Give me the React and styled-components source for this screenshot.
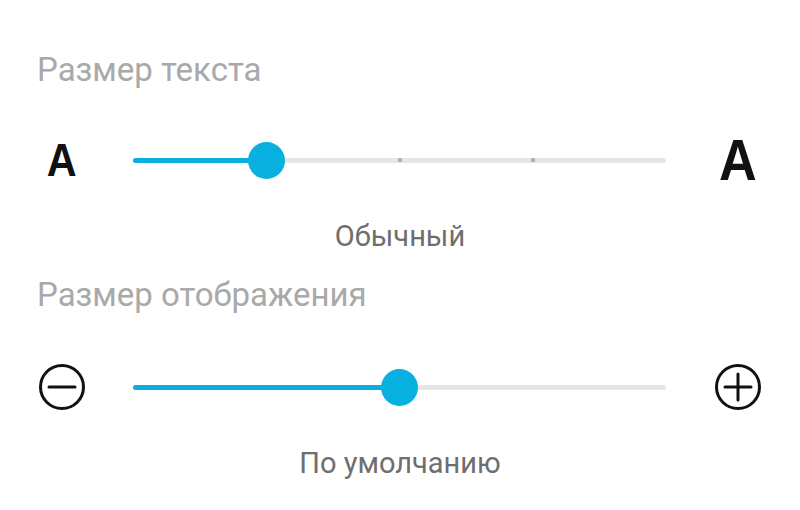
import styled, { createGlobalStyle } from 'styled-components';

const GlobalStyle = createGlobalStyle`
	html, body {
		margin: 0;
		padding: 0;
		background: #ffffff;
	}

	body {
		font-family: Roboto, 'Noto Sans', sans-serif;
	}
`;

const colors = {
	accent: '#08b0e0',
	track: '#e6e6e6',
	tick: '#b2b2b2',
	title: '#a9a9a9',
	caption: '#6e6e6e',
	icon: '#111111',
};

const Page = styled.div`
	width: 800px;
	height: 510px;
	padding-top: 50px;
	box-sizing: border-box;
	overflow: hidden;
`;

const SectionTitle = styled.h2`
	margin: ${(props) => props.$top || 0}px 0 0 37px;
	font-size: 33px;
	line-height: 40px;
	font-weight: 400;
	color: ${colors.title};
`;

const Row = styled.div`
	display: grid;
	grid-template-columns: 133px 533px 1fr;
	align-items: center;
	height: 60px;
	margin-top: ${(props) => props.$top}px;
`;

const LeftCell = styled.div`
	display: flex;
	justify-content: center;
	align-items: center;
	padding-right: 9px;
`;

const RightCell = styled.div`
	display: flex;
	justify-content: center;
	align-items: center;
	padding-left: 10px;
`;

const Letter = styled.span`
	font-family: 'Liberation Sans', Arial, sans-serif;
	font-weight: 700;
	font-size: ${(props) => props.$size}px;
	line-height: 1;
	color: ${colors.icon};
	transform: scaleX(0.9);
`;

const Track = styled.div`
	position: relative;
	height: 5px;
	border-radius: 3px;
	background: ${colors.track};
`;

const Fill = styled.div`
	height: 100%;
	border-radius: 3px;
	background: ${colors.accent};
`;

const Tick = styled.span`
	position: absolute;
	top: 50%;
	width: 4px;
	height: 4px;
	margin: -2px 0 0 -2px;
	background: ${colors.tick};
`;

const Thumb = styled.span`
	position: absolute;
	top: 50%;
	width: 37px;
	height: 37px;
	margin: -18.5px 0 0 -18.5px;
	border-radius: 50%;
	background: ${colors.accent};
`;

const Caption = styled.div`
	margin-top: ${(props) => props.$top}px;
	text-align: center;
	font-size: 29px;
	line-height: 36px;
	color: ${colors.caption};
`;

const CircleIcon = ({ plus }) => (
	<svg width="48" height="48" viewBox="0 0 48 48" fill="none" stroke={colors.icon} strokeWidth="3" strokeLinecap="round">
		<circle cx="24" cy="24" r="21.5" />
		<line x1="11" y1="24" x2="37" y2="24" />
		{plus && <line x1="24" y1="11" x2="24" y2="37" />}
	</svg>
);

const Slider = ({ value, steps = 0 }) => {
	const ticks = [];
	for (let i = 1; i < steps; i++) {
		const pos = (i / steps) * 100;
		if (pos > value) ticks.push(pos);
	}

	return (
		<Track>
			<Fill style={{ width: `${value}%` }} />
			{ticks.map((pos) => (
				<Tick key={pos} style={{ left: `${pos}%` }} />
			))}
			<Thumb style={{ left: `${value}%` }} />
		</Track>
	);
};

const App = () => {
	return (
		<Page>
			<GlobalStyle />

			<SectionTitle>Размер текста</SectionTitle>
			<Row $top={40}>
				<LeftCell>
					<Letter $size={46}>A</Letter>
				</LeftCell>
				<Slider value={25} steps={4} />
				<RightCell>
					<Letter $size={58}>A</Letter>
				</RightCell>
			</Row>
			<Caption $top={28}>Обычный</Caption>

			<SectionTitle $top={21}>Размер отображения</SectionTitle>
			<Row $top={42}>
				<LeftCell>
					<CircleIcon />
				</LeftCell>
				<Slider value={50} />
				<RightCell>
					<CircleIcon plus />
				</RightCell>
			</Row>
			<Caption $top={28}>По умолчанию</Caption>
		</Page>
	);
};

export default App;
